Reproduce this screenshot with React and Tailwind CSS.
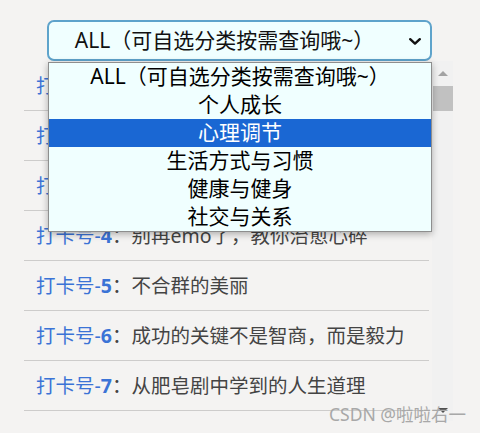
import React from 'react';

const options = ['ALL（可自选分类按需查询哦~）', '个人成长', '心理调节', '生活方式与习惯', '健康与健身', '社交与关系'];

const items = [
  '如何成为更好的自己',
  '坚持早起的七个小技巧',
  '学会与焦虑和平相处',
  '别再emo了，教你治愈心碎',
  '不合群的美丽',
  '成功的关键不是智商，而是毅力',
  '从肥皂剧中学到的人生道理',
];

const font = { fontFamily: '"Noto Sans", "Noto Sans CJK SC", sans-serif' };

export default function App() {
  return (
    <div className="relative min-h-screen bg-[#f4f3f2] pt-5 overflow-hidden" style={font}>
      {/* select + open dropdown */}
      <div className="relative z-10 ml-[47px] w-[385px]">
        <div className="flex h-[41px] items-center rounded-[7px] border-2 border-[#5ea3cb] bg-[#f0ffff] pr-[30px]">
          <span className="flex-1 text-center text-[21px] leading-none text-[#111]">ALL（可自选分类按需查询哦~）</span>
          <svg className="absolute right-[11px] top-[18px]" width="12" height="7" viewBox="0 0 12 7">
            <path d="M1.2 1.2 6 5.6 10.8 1.2" fill="none" stroke="#111" strokeWidth="2.4" strokeLinecap="round" strokeLinejoin="round" />
          </svg>
        </div>
        <div className="absolute left-[1px] top-[42px] w-[384px] border border-[#8e8e8e] bg-[#f0ffff] shadow-[0_2px_7px_rgba(0,0,0,0.3)]">
          {options.map((o, i) => (
            <div
              key={o}
              className={
                i === 2
                  ? 'flex h-[28px] items-center justify-center bg-[#1a67d3] text-[21px] text-white'
                  : 'flex h-[28px] items-center justify-center text-[21px] text-black'
              }
            >
              {o}
            </div>
          ))}
        </div>
      </div>

      {/* list with scrollbar */}
      <div className="ml-6 flex">
        <ul className="w-[405px]">
          {items.map((t, i) => (
            <li key={i} className="flex h-[50px] items-center border-b border-[#cdcccb] pl-3 text-[19.5px]">
              <span className="text-[#3b73d6]">打卡号-</span>
              <span className="font-bold text-[#3b73d6]">{i + 1}</span>
              <span className="text-[#444]">：{t}</span>
            </li>
          ))}
        </ul>
        <div className="ml-[3px] flex h-[360px] w-[21px] flex-col items-center bg-[#f1f1f1]">
          <div className="flex h-[25px] items-center justify-center">
            <div className="h-0 w-0 border-x-[5px] border-b-[5px] border-x-transparent border-b-[#a3a3a3]" />
          </div>
          <div className="h-[25px] w-[20px] bg-[#c1c1c1]" />
          <div className="flex-1" />
          <div className="flex h-[22px] items-center justify-center">
            <div className="h-0 w-0 border-x-[5px] border-t-[5px] border-x-transparent border-t-[#505050]" />
          </div>
        </div>
      </div>

      <div className="absolute left-[329px] top-[401px] text-[17.5px] text-[#a8a8a8]">CSDN @啦啦右一</div>
    </div>
  );
}
